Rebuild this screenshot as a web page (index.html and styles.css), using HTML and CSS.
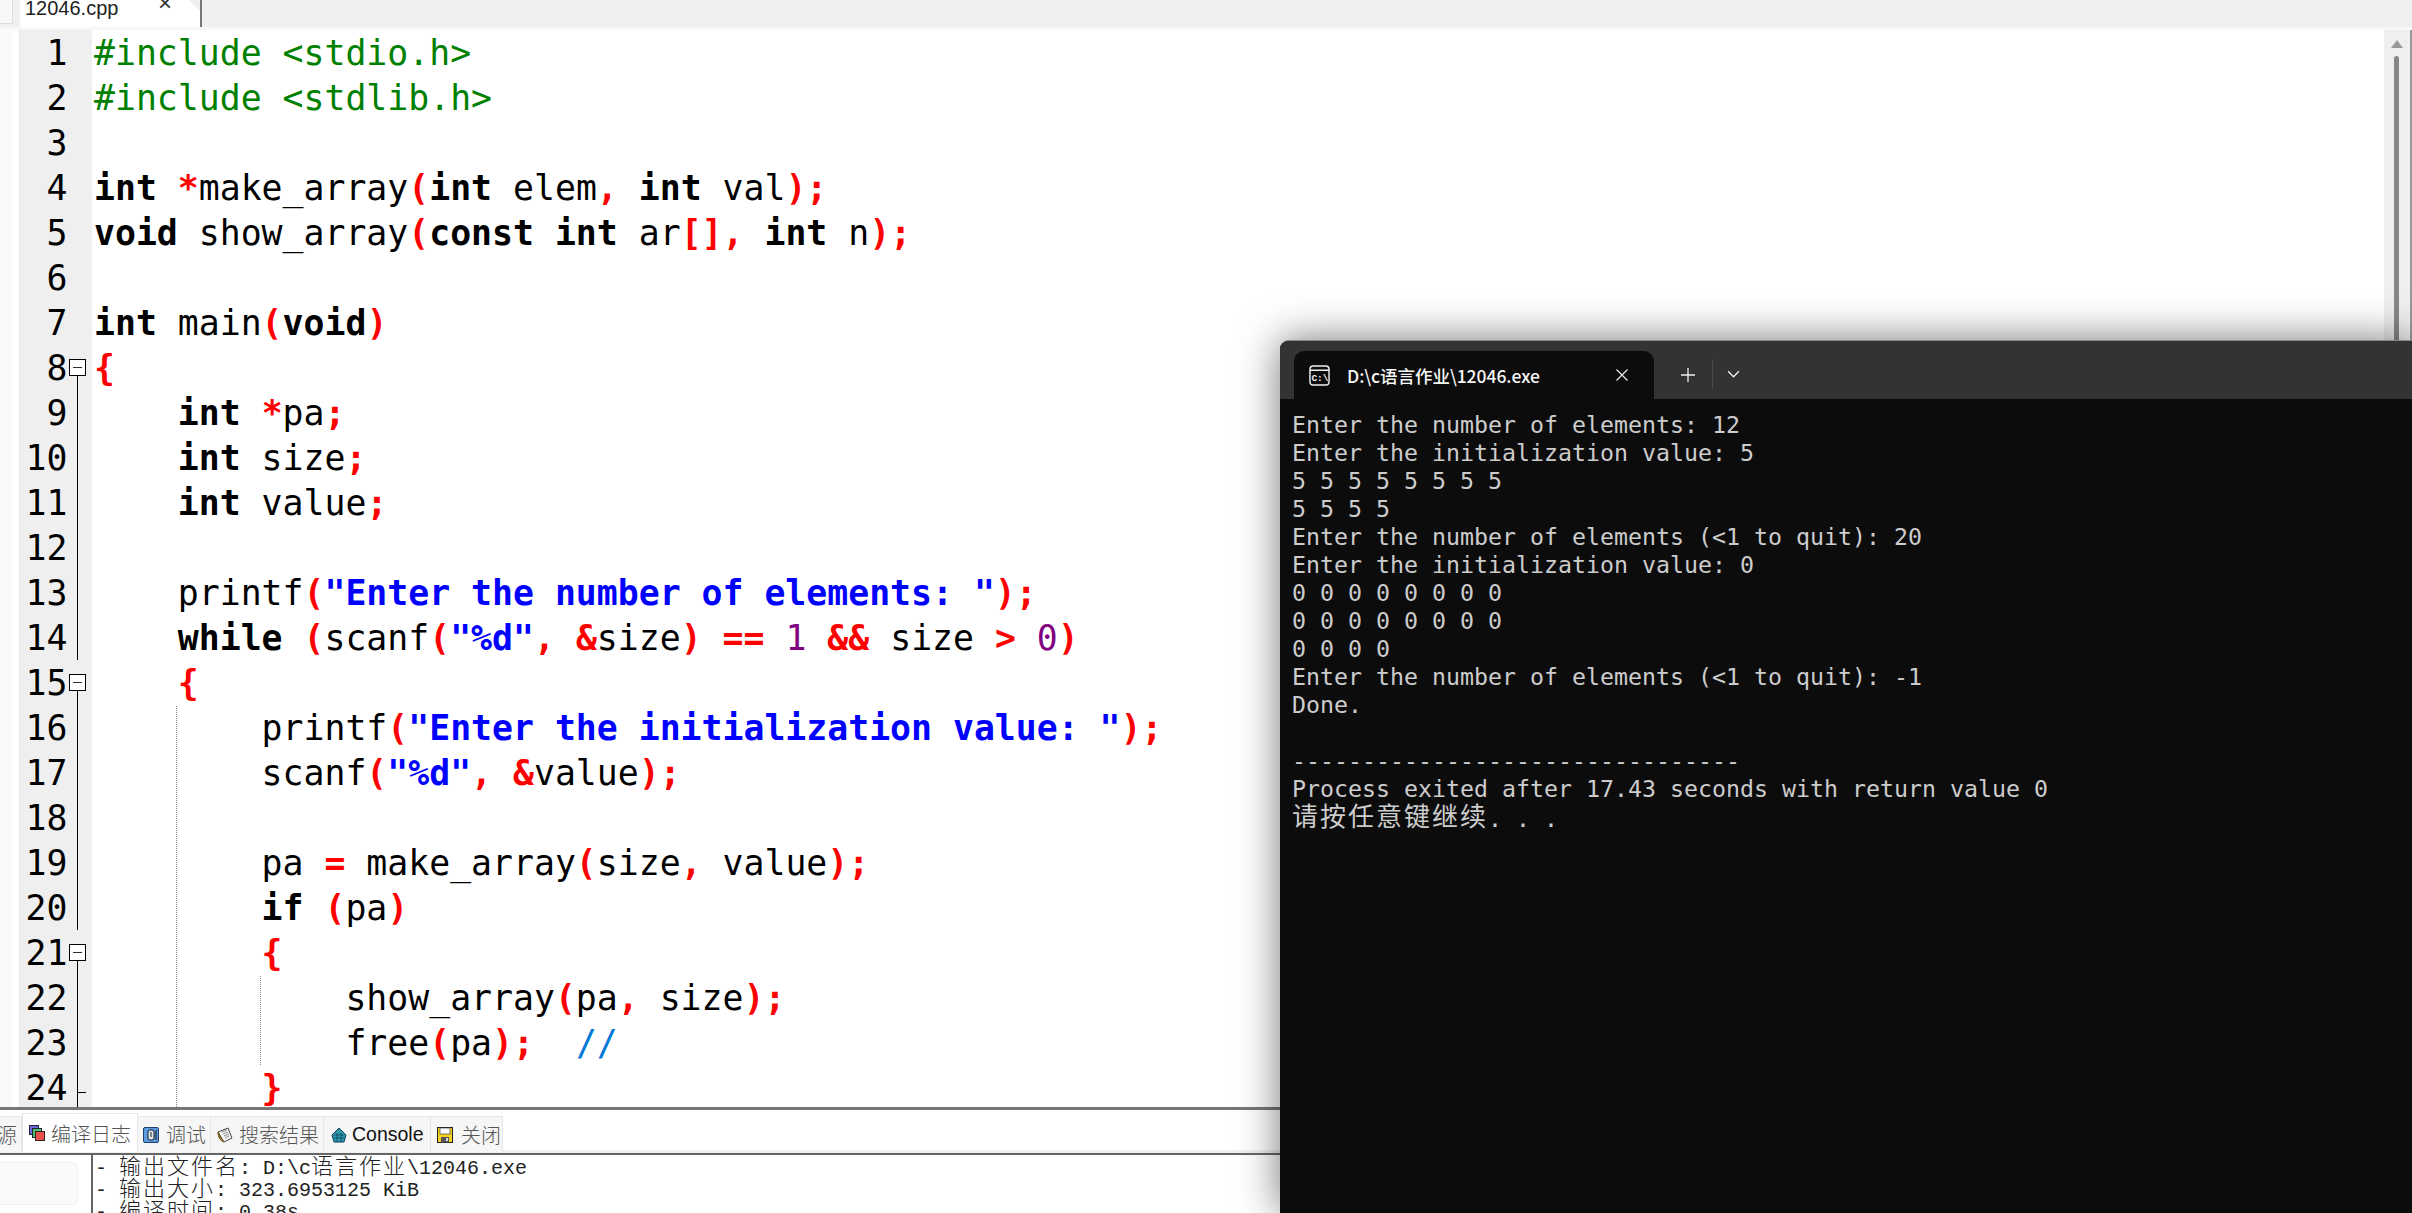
FILE: index.html
```html
<!DOCTYPE html>
<html lang="zh-CN">
<head>
<meta charset="utf-8">
<title>12046.cpp</title>
<link rel="stylesheet" href="styles.css">
</head>
<body>
<div class="app">
  <header class="tabbar">
    <div class="stub"></div>
    <div class="filetab"><span class="filename">12046.cpp</span><span class="fileclose">×</span></div>
  </header>
  <main class="workspace">
    <aside class="sidepane"></aside>
    <section class="gutter">
      <div class="gl"><span class="num">1</span><span class="fold"></span></div>
      <div class="gl"><span class="num">2</span><span class="fold"></span></div>
      <div class="gl"><span class="num">3</span><span class="fold"></span></div>
      <div class="gl"><span class="num">4</span><span class="fold"></span></div>
      <div class="gl"><span class="num">5</span><span class="fold"></span></div>
      <div class="gl"><span class="num">6</span><span class="fold"></span></div>
      <div class="gl"><span class="num">7</span><span class="fold"></span></div>
      <div class="gl"><span class="num">8</span><span class="fold open"><i class="box"></i></span></div>
      <div class="gl"><span class="num">9</span><span class="fold mid"></span></div>
      <div class="gl"><span class="num">10</span><span class="fold mid"></span></div>
      <div class="gl"><span class="num">11</span><span class="fold mid"></span></div>
      <div class="gl"><span class="num">12</span><span class="fold mid"></span></div>
      <div class="gl"><span class="num">13</span><span class="fold mid"></span></div>
      <div class="gl"><span class="num">14</span><span class="fold mid"></span></div>
      <div class="gl"><span class="num">15</span><span class="fold open"><i class="box"></i></span></div>
      <div class="gl"><span class="num">16</span><span class="fold mid"></span></div>
      <div class="gl"><span class="num">17</span><span class="fold mid"></span></div>
      <div class="gl"><span class="num">18</span><span class="fold mid"></span></div>
      <div class="gl"><span class="num">19</span><span class="fold mid"></span></div>
      <div class="gl"><span class="num">20</span><span class="fold mid"></span></div>
      <div class="gl"><span class="num">21</span><span class="fold open"><i class="box"></i></span></div>
      <div class="gl"><span class="num">22</span><span class="fold mid"></span></div>
      <div class="gl"><span class="num">23</span><span class="fold mid"></span></div>
      <div class="gl"><span class="num">24</span><span class="fold mid"><i class="tick"></i></span></div>
    </section>
    <section class="code">
<i class="guide guide-a"></i><i class="guide guide-b"></i>
<div class="cl pp">#include &lt;stdio.h&gt;</div>
<div class="cl pp">#include &lt;stdlib.h&gt;</div>
<div class="cl"></div>
<div class="cl"><b>int</b> <s>*</s>make_array<s>(</s><b>int</b> elem<s>,</s> <b>int</b> val<s>);</s></div>
<div class="cl"><b>void</b> show_array<s>(</s><b>const</b> <b>int</b> ar<s>[],</s> <b>int</b> n<s>);</s></div>
<div class="cl"></div>
<div class="cl"><b>int</b> main<s>(</s><b>void</b><s>)</s></div>
<div class="cl"><s>{</s></div>
<div class="cl">    <b>int</b> <s>*</s>pa<s>;</s></div>
<div class="cl">    <b>int</b> size<s>;</s></div>
<div class="cl">    <b>int</b> value<s>;</s></div>
<div class="cl"></div>
<div class="cl">    printf<s>(</s><u>"Enter the number of elements: "</u><s>);</s></div>
<div class="cl">    <b>while</b> <s>(</s>scanf<s>(</s><u>"%d"</u><s>,</s> <s>&amp;</s>size<s>)</s> <s>==</s> <em>1</em> <s>&amp;&amp;</s> size <s>&gt;</s> <em>0</em><s>)</s></div>
<div class="cl">    <s>{</s></div>
<div class="cl">        printf<s>(</s><u>"Enter the initialization value: "</u><s>);</s></div>
<div class="cl">        scanf<s>(</s><u>"%d"</u><s>,</s> <s>&amp;</s>value<s>);</s></div>
<div class="cl"></div>
<div class="cl">        pa <s>=</s> make_array<s>(</s>size<s>,</s> value<s>);</s></div>
<div class="cl">        <b>if</b> <s>(</s>pa<s>)</s></div>
<div class="cl">        <s>{</s></div>
<div class="cl">            show_array<s>(</s>pa<s>,</s> size<s>);</s></div>
<div class="cl">            free<s>(</s>pa<s>);</s>  <span class="comment">//</span></div>
<div class="cl">        <s>}</s></div>
    </section>
    <aside class="scrollbar"><i class="arrow"></i><i class="thumb"></i></aside>
  </main>
  <nav class="bottomtabs">
    <div class="btab first"><span class="zh clipped">源</span></div>
    <div class="btab active">
      <svg class="ticon" viewBox="0 0 16 16"><rect x="0.5" y="0.5" width="9" height="9" fill="#6a6ae0" stroke="#223"/><rect x="3.5" y="3.5" width="9" height="9" fill="#4cc06a" stroke="#223"/><rect x="6.5" y="6.5" width="9" height="9" fill="#e8504a" stroke="#322"/></svg>
      <span class="zh">编译日志</span>
    </div>
    <div class="btab">
      <svg class="ticon" viewBox="0 0 16 16"><rect x="0.5" y="0.5" width="15" height="15" rx="1.5" fill="#5b9ade" stroke="#1d3f70"/><rect x="5" y="3" width="6" height="10" rx="2" fill="#dfe8f2" stroke="#1a1a1a"/><path d="M8 5v5M13 3v10" stroke="#1a1a1a" fill="none"/></svg>
      <span class="zh">调试</span>
    </div>
    <div class="btab">
      <svg class="ticon" viewBox="0 0 16 16"><path d="M1 5L11 1l4 10-8 4z" fill="#f4f4f4" stroke="#444"/><path d="M5 5l5-2M6 7l5-2M7 9l5-2M8 11l4-2" stroke="#888" fill="none"/><path d="M1 5q0 8 6 10L3 10z" fill="#e8b04a" stroke="#6a4a10"/></svg>
      <span class="zh">搜索结果</span>
    </div>
    <div class="btab">
      <svg class="ticon" viewBox="0 0 16 16"><path d="M3 6l5-5 5 5 2 2-2 7H3L1 8z" fill="#2f9aa8" stroke="#0c3a5c"/><path d="M3 8h10M3 11h10M6 6v9M10 6v9" stroke="#0c3a5c" stroke-width=".7" fill="none"/></svg>
      <span class="en">Console</span>
    </div>
    <div class="btab">
      <svg class="ticon" viewBox="0 0 16 16"><rect x="0.5" y="0.5" width="15" height="15" fill="#f4d020" stroke="#222"/><rect x="3" y="1" width="10" height="6" fill="#fafafa" stroke="#333" stroke-width=".6"/><rect x="4" y="10" width="8" height="5.5" fill="#555"/><rect x="9" y="11" width="2" height="3" fill="#ddd"/></svg>
      <span class="zh">关闭</span>
    </div>
  </nav>
  <footer class="bottom">
    <div class="panel-left"><div class="panel-card"></div></div>
    <div class="log">
      <div class="logline">- <span class="wide">输出文件名</span>: D:\c<span class="wide">语言作业</span>\12046.exe</div>
      <div class="logline">- <span class="wide">输出大小</span>: 323.6953125 KiB</div>
      <div class="logline">- <span class="wide">编译时间</span>: 0.38s</div>
    </div>
  </footer>
</div>
<div class="terminal">
  <div class="titlebar">
    <div class="ttab">
      <svg class="ticn" viewBox="0 0 22 22"><rect x="1" y="1" width="20" height="20" rx="3.5" fill="none" stroke="#f2f2f2" stroke-width="1.5"/><path d="M1 5.5h20" stroke="#f2f2f2" stroke-width="1.5"/><text x="2.5" y="17" class="ticn-text">C:\</text></svg>
      <span class="ttitle">D:\c语言作业\12046.exe</span>
      <svg class="tclose" viewBox="0 0 12 12"><path d="M.5.5l11 11M11.5.5l-11 11" stroke="#f0f0f0" stroke-width="1.1" fill="none"/></svg>
    </div>
    <svg class="tplus" viewBox="0 0 14 14"><path d="M7 0v14M0 7h14" stroke="#f0f0f0" stroke-width="1.3" fill="none"/></svg>
    <i class="tdiv"></i>
    <svg class="tchev" viewBox="0 0 12 7"><path d="M1 1l5 5 5-5" stroke="#f0f0f0" stroke-width="1.2" fill="none"/></svg>
  </div>
  <pre class="tbody">Enter the number of elements: 12
Enter the initialization value: 5
5 5 5 5 5 5 5 5
5 5 5 5
Enter the number of elements (&lt;1 to quit): 20
Enter the initialization value: 0
0 0 0 0 0 0 0 0
0 0 0 0 0 0 0 0
0 0 0 0
Enter the number of elements (&lt;1 to quit): -1
Done.

--------------------------------
Process exited after 17.43 seconds with return value 0
<span class="tzh">请按任意键继续</span>. . .</pre>
</div>
</body>
</html>
```

FILE: styles.css
```css
* { box-sizing: border-box; }
html, body { margin: 0; padding: 0; width: 2412px; height: 1213px; overflow: hidden; background: #fff; }
.app { display: flex; flex-direction: column; height: 1213px; font-family: "Liberation Sans", sans-serif; }

.tabbar { height: 30px; display: flex; background: #f0f0f0; border-bottom: 3px solid #f8f8f8; flex: none; }
.stub { width: 13px; height: 24px; background: #f8f8f8; border-right: 1px solid #ddd; border-bottom: 1px solid #ddd; }
.filetab { width: 182px; margin-left: 7px; height: 27px; background: #fff; position: relative; border-right: 2px solid #777; overflow: hidden; display: flex; }
.filetab::after { content: ""; position: absolute; right: 0; top: 0; width: 0; height: 0; border-top: 11px solid #f0f0f0; border-left: 11px solid transparent; }
.filename { font-size: 20px; line-height: 20px; margin: -2px 0 0 5px; color: #222; }
.fileclose { position: absolute; left: 136px; top: -9px; font-size: 24px; color: #333; width: 18px; text-align: center; line-height: 24px; }

.workspace { height: 1077px; display: flex; flex: none; overflow: hidden; }
.sidepane { width: 20px; flex: none; background: #fff; border-left: 12px solid #fafafa; border-right: 0; box-shadow: inset -1px 0 0 #e8e8e8; }
.gutter { width: 72px; flex: none; background: #efefef; }
.gl { height: 45px; display: flex; font: 34.8px/47px "DejaVu Sans Mono", monospace; color: #000; }
.num { width: 47.5px; text-align: right; flex: none; }
.fold { width: 17px; margin-left: 1px; position: relative; flex: none; }
.fold.mid::before { content: ""; position: absolute; left: 8px; top: 0; bottom: 0; width: 1px; background: #000; }
.fold.open::before { content: ""; position: absolute; left: 8px; top: 31px; bottom: 0; width: 1px; background: #000; }
.box { position: absolute; left: 0; top: 14px; width: 17px; height: 17px; border: 1px solid #000; background: #fff; }
.box::after { content: ""; position: absolute; left: 3px; right: 3px; top: 7px; height: 1px; background: #333; }
.tick { position: absolute; left: 9px; top: 27px; width: 8px; height: 1px; background: #000; }

.code { flex: 1; position: relative; background: #fff; padding-left: 2px; overflow: hidden; font: 34.8px/47px "DejaVu Sans Mono", monospace; color: #000; }
.cl { height: 45px; white-space: pre; }
.cl b { font-weight: 700; }
.cl s { text-decoration: none; color: #f00; font-weight: 700; }
.cl u { text-decoration: none; color: #00f; font-weight: 700; }
.cl em { font-style: normal; color: #800080; }
.pp { color: #008000; }
.comment { color: #0078d7; }
.guide { position: absolute; width: 0; border-left: 1px dotted #888; }
.guide-a { left: 84px; top: 676px; bottom: 0; }
.guide-b { left: 168px; top: 946px; height: 89px; }

.scrollbar { width: 28px; flex: none; background: #efefef; border-right: 2px solid #999; position: relative; }
.arrow { position: absolute; left: 7px; top: 10px; width: 0; height: 0; border-left: 6px solid transparent; border-right: 6px solid transparent; border-bottom: 8px solid #999; }
.thumb { position: absolute; left: 10px; top: 26px; width: 5px; height: 320px; background: #888; border-radius: 3px 3px 0 0; }

.bottomtabs { height: 48px; flex: none; display: flex; padding: 6px 0 0 0; background: #fff; border-top: 3px solid #777; border-bottom: 2px solid #666; box-shadow: inset 0 -3px 0 #f0f0f0; }
.btab { height: 36px; display: flex; align-items: center; gap: 7px; padding-left: 5px; background: #f6f6f6; border: 1px solid #e6e6e6; border-left: 0; border-bottom: 0; font-size: 20px; color: #555; flex: none; }
.btab:nth-child(1) { width: 22px; padding-left: 0; overflow: hidden; }
.btab:nth-child(2) { width: 116px; background: #fff; border-left: 1px solid #e6e6e6; margin-top: -3px; height: 39px; padding-left: 6px; gap: 6px; }
.btab:nth-child(3) { width: 73px; }
.btab:nth-child(4) { width: 113px; padding-left: 6px; gap: 6px; }
.btab:nth-child(5) { width: 107px; color: #111; padding-left: 7px; gap: 5px; }
.btab:nth-child(6) { width: 72px; padding-left: 6px; gap: 8px; }
.ticon { width: 16px; height: 16px; flex: none; }
.zh { font-family: "Noto Sans CJK SC", sans-serif; font-weight: 300; white-space: nowrap; }
.clipped { margin-left: -3px; }
.en { font-family: "Liberation Sans", sans-serif; font-size: 19.5px; }

.bottom { flex: 1; display: flex; min-height: 0; overflow: hidden; }
.panel-left { width: 91px; flex: none; padding: 7px 13px 8px 0; background: #fff; }
.panel-card { height: 43px; background: #fafafa; border: 1px solid #f0f0f0; border-left: 0; border-radius: 0 5px 5px 0; }
.log { flex: 1; background: #fff; border-left: 2px solid #666; padding: 0 0 0 2px; font: 20px/22px "Liberation Mono", monospace; color: #222; }
.logline { height: 22px; white-space: pre; position: relative; top: -2px; }
.wide { font-family: "Noto Sans CJK SC", sans-serif; font-size: 22px; line-height: 1; font-weight: 300; letter-spacing: 2px; }

.terminal { position: absolute; left: 1280px; top: 340px; right: 0; bottom: 0; background: #0c0c0c; border-top-left-radius: 9px; box-shadow: 0 0 42px rgba(0,0,0,.55); overflow: hidden; border-top: 1px solid #888; }
.titlebar { height: 58px; background: #333; display: flex; align-items: flex-end; padding-left: 14px; }
.ttab { width: 360px; height: 48px; background: #0c0c0c; border-radius: 10px 10px 0 0; display: flex; align-items: center; padding-left: 15px; position: relative; }
.ticn { width: 21px; height: 21px; flex: none; }
.ticn-text { font: 700 10px "Liberation Mono", monospace; fill: #f2f2f2; }
.ttitle { margin-left: 17px; color: #f6f6f6; font: 500 17.5px "Noto Sans CJK SC", "Noto Sans", sans-serif; letter-spacing: -.05px; white-space: nowrap; }
.tclose { position: absolute; left: 322px; top: 18px; width: 12px; height: 12px; }
.tplus { width: 14px; height: 14px; margin: 0 0 17px 27px; flex: none; }
.tdiv { width: 1px; height: 30px; background: #4a4a4a; margin: 0 0 10px 17px; flex: none; }
.tchev { width: 13px; height: 8px; margin: 0 0 21px 14px; flex: none; }
.tbody { margin: 0; padding: 12px 0 0 12px; font: 23.25px/28px "DejaVu Sans Mono", monospace; color: #ccc; }
.tzh { font-family: "Noto Sans CJK SC", sans-serif; font-size: 26px; line-height: 1; letter-spacing: 2px; position: relative; top: -1px; }
```
